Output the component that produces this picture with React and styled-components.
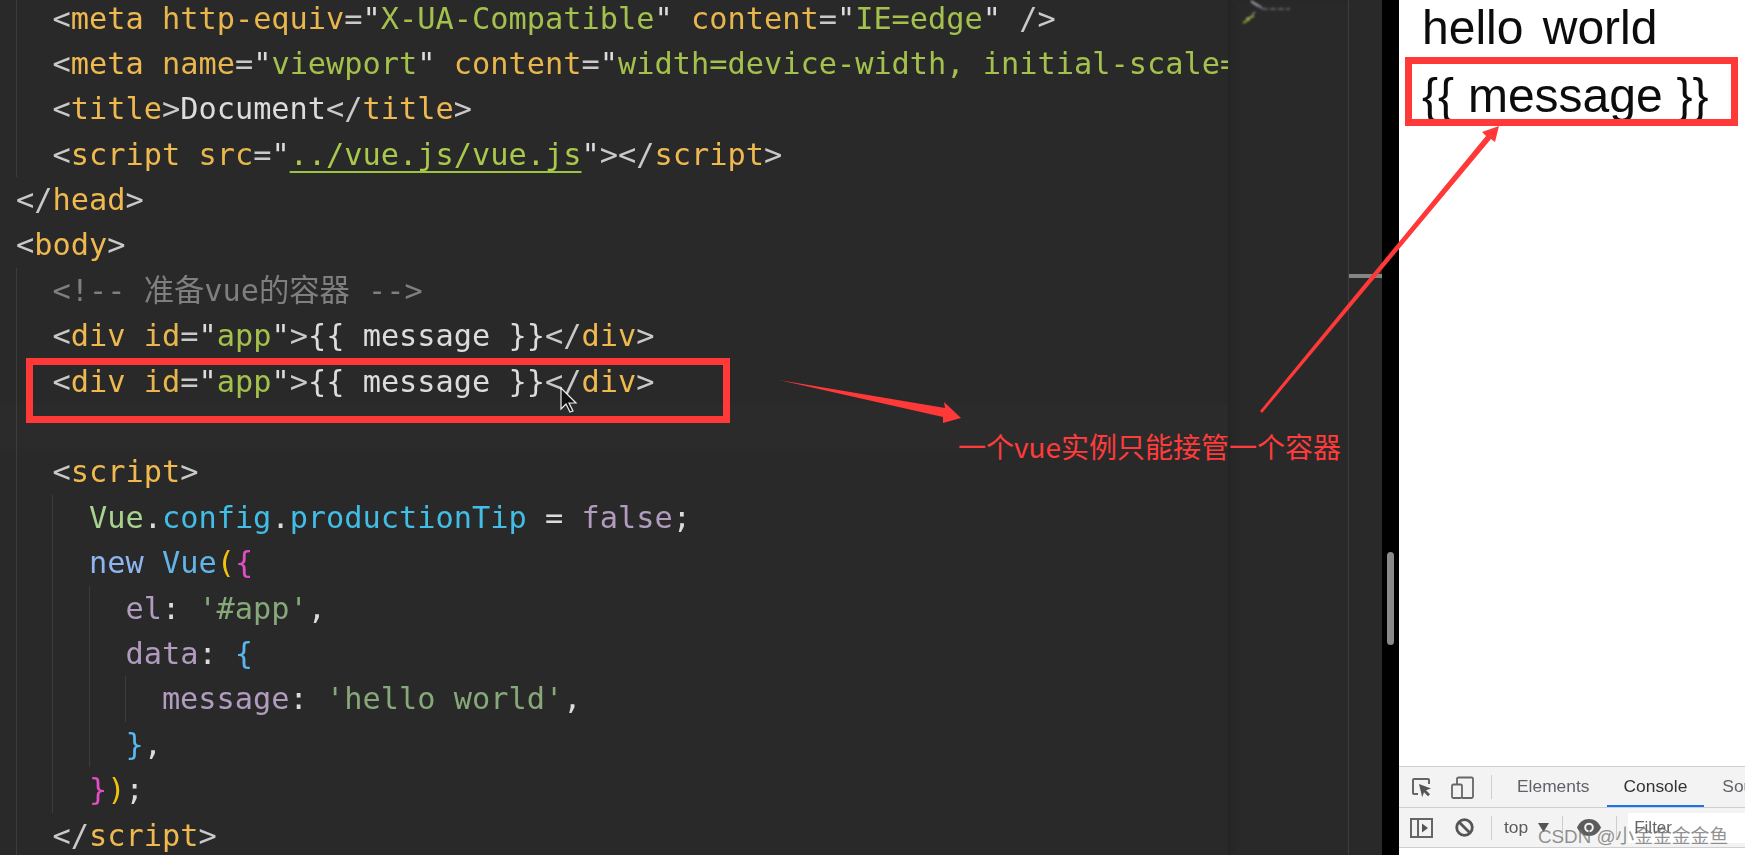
import React from 'react';
import styled, { createGlobalStyle } from 'styled-components';

const GlobalStyle = createGlobalStyle`
  html, body { margin: 0; padding: 0; height: 100%; background: #fff; overflow: hidden; }
  #root { height: 100%; }
`;

const Page = styled.div`
  position: relative;
  display: flex;
  width: 1745px;
  height: 855px;
  overflow: hidden;
`;

/* editor side */
const Editor = styled.div`
  display: flex;
  flex: 0 0 1382px;
  background: #292929;
`;

const CodePane = styled.div`
  flex: 0 0 1228px;
  overflow: hidden;
  font-family: "DejaVu Sans Mono", "Noto Sans CJK SC", monospace;
  font-size: 30.3px;
  color: #d6d6d6;
  filter: blur(0.45px);
`;

const CodeLines = styled.div`
  margin-top: -4.5px;
`;

const Line = styled.div`
  display: flex;
  height: 45.4px;
  line-height: 45.4px;
  padding-left: 16px;
  white-space: pre;
  background: ${(p) => (p.$active ? '#2b2b2b' : 'transparent')};
`;

const Indent = styled.span`
  flex: 0 0 2ch;
  box-sizing: border-box;
  border-left: 1px solid ${(p) => (p.$guide ? '#3c3c3c' : 'transparent')};
`;

const Tok = styled.span`
  color: ${(p) => p.$c};
`;

const LinkTok = styled.span`
  color: #a9c94a;
  text-decoration: underline;
  text-decoration-color: #9bc53d;
  text-decoration-thickness: 2px;
  text-decoration-skip-ink: none;
  text-underline-offset: 6px;
`;

const Minimap = styled.div`
  flex: 0 0 120px;
  border-right: 1px solid #3d3d3d;
  box-shadow: inset 6px 0 6px -4px #232323;
`;

const MiniStrokes = styled.svg`
  display: block;
  filter: blur(0.8px);
`;

const Ruler = styled.div`
  flex: 1;
  padding-top: 274px;
`;

const RulerMark = styled.div`
  height: 4px;
  background: #858585;
`;

const Gutter = styled.div`
  flex: 0 0 17px;
  box-sizing: border-box;
  background: #000;
  padding: 552px 5px 0 5px;
`;

const ScrollThumb = styled.div`
  height: 93px;
  border-radius: 4px;
  background: #8a8a8a;
`;

/* browser side */
const Preview = styled.div`
  flex: 1;
  display: flex;
  flex-direction: column;
  background: #fff;
  font-family: "Liberation Sans", Arial, sans-serif;
`;

const Output = styled.div`
  margin-top: -6px;
  padding-left: 23px;
  font-size: 48px;
  line-height: 68px;
  color: #0c0c0c;
  filter: blur(0.4px);
`;

const OutputLine = styled.div`
  word-spacing: ${(p) => p.$gap}px;
`;

const DevTools = styled.div`
  margin-top: auto;
  height: 89px;
  color: #5a5a5a;
  filter: blur(0.35px);
`;

const ToolRow = styled.div`
  display: flex;
  align-items: center;
  height: ${(p) => p.$h}px;
  background: #f3f3f3;
  border-top: 1px solid ${(p) => p.$line};
  overflow: hidden;
`;

const IconSlot = styled.span`
  display: flex;
  flex: 0 0 auto;
  margin-left: ${(p) => p.$left}px;
`;

const Divider = styled.span`
  flex: 0 0 1px;
  height: 24px;
  margin-left: ${(p) => p.$left}px;
  background: #cdcdcd;
`;

const Tab = styled.span`
  flex: 0 0 auto;
  display: flex;
  align-items: center;
  align-self: stretch;
  box-sizing: border-box;
  padding: 0 17px;
  margin-left: ${(p) => p.$left || 0}px;
  font-size: 17.4px;
  color: ${(p) => (p.$active ? '#333' : '#5f6368')};
  border-bottom: 2px solid ${(p) => (p.$active ? '#1a73e8' : 'transparent')};
`;

const ContextLabel = styled.span`
  flex: 0 0 auto;
  margin-left: 12px;
  font-size: 17.4px;
  color: #5a5a5a;
`;

const FilterBox = styled.span`
  flex: 1;
  align-self: stretch;
  margin: 5px 0 4px 11px;
  padding-left: 6px;
  background: #fff;
  font-size: 17px;
  line-height: 29px;
  color: #666;
`;

const BlankStrip = styled.div`
  height: 10px;
  background: #fff;
  border-top: 1px solid #cfcfcf;
`;

/* hand-drawn annotations lying over the recording */
const Marks = styled.svg`
  position: absolute;
  inset: 0;
  pointer-events: none;
`;

const RedBox = styled.div`
  position: absolute;
  box-sizing: border-box;
  left: ${(p) => p.$x}px;
  top: ${(p) => p.$y}px;
  width: ${(p) => p.$w}px;
  height: ${(p) => p.$h}px;
  border: 7px solid #ff3838;
`;

const Note = styled.div`
  position: absolute;
  left: 958px;
  top: 428px;
  font-family: "Noto Sans CJK SC", sans-serif;
  font-size: 28px;
  line-height: 36px;
  color: #ff3b3b;
  white-space: nowrap;
`;

const Watermark = styled.div`
  position: absolute;
  left: 1538px;
  top: 825px;
  font-family: "Liberation Sans", "Noto Sans CJK SC", sans-serif;
  font-size: 18.8px;
  line-height: 24px;
  color: rgba(110, 110, 110, 0.75);
  white-space: nowrap;
`;

const C = {
  punct: '#c9c9c9',
  tag: '#efb94f',
  attr: '#e8b64c',
  str: '#a3c14c',
  white: '#dcdcdc',
  comment: '#7f7f7f',
  vue: '#a6d48f',
  prop: '#41bde6',
  kw: '#8fb4f2',
  cls: '#62b5e8',
  yellow: '#f4c20d',
  pink: '#e24fc4',
  muted: '#b19cbf',
  mstr: '#87a878',
  brace: '#57b9ef',
};

const T = ({ c, children }) => <Tok $c={c}>{children}</Tok>;

const Div = () => (
  <>
    <T c={C.punct}>&lt;</T>
    <T c={C.tag}>div</T>
    <T c={C.attr}> id</T>
    <T c={C.punct}>=</T>
    <T c={C.white}>"</T>
    <T c={C.str}>app</T>
    <T c={C.white}>"</T>
    <T c={C.punct}>&gt;</T>
    <T c={C.white}>{'{{ message }}'}</T>
    <T c={C.punct}>&lt;/</T>
    <T c={C.tag}>div</T>
    <T c={C.punct}>&gt;</T>
  </>
);

const Guides = ({ list }) =>
  list.map((g, i) => <Indent key={i} $guide={g} />);

const CodeBlock = () => (
  <CodeLines>
    <Line>
      <Guides list={[1]} />
      <T c={C.punct}>&lt;</T><T c={C.tag}>meta</T><T c={C.attr}> http-equiv</T><T c={C.punct}>=</T>
      <T c={C.white}>"</T><T c={C.str}>X-UA-Compatible</T><T c={C.white}>"</T>
      <T c={C.attr}> content</T><T c={C.punct}>=</T><T c={C.white}>"</T><T c={C.str}>IE=edge</T><T c={C.white}>"</T>
      <T c={C.punct}> /&gt;</T>
    </Line>
    <Line>
      <Guides list={[1]} />
      <T c={C.punct}>&lt;</T><T c={C.tag}>meta</T><T c={C.attr}> name</T><T c={C.punct}>=</T>
      <T c={C.white}>"</T><T c={C.str}>viewport</T><T c={C.white}>"</T>
      <T c={C.attr}> content</T><T c={C.punct}>=</T><T c={C.white}>"</T>
      <T c={C.str}>width=device-width, initial-scale=1.0</T><T c={C.white}>"</T><T c={C.punct}> /&gt;</T>
    </Line>
    <Line>
      <Guides list={[1]} />
      <T c={C.punct}>&lt;</T><T c={C.tag}>title</T><T c={C.punct}>&gt;</T><T c={C.white}>Document</T>
      <T c={C.punct}>&lt;/</T><T c={C.tag}>title</T><T c={C.punct}>&gt;</T>
    </Line>
    <Line>
      <Guides list={[1]} />
      <T c={C.punct}>&lt;</T><T c={C.tag}>script</T><T c={C.attr}> src</T><T c={C.punct}>=</T><T c={C.white}>"</T>
      <LinkTok>../vue.js/vue.js</LinkTok><T c={C.white}>"</T>
      <T c={C.punct}>&gt;&lt;/</T><T c={C.tag}>script</T><T c={C.punct}>&gt;</T>
    </Line>
    <Line>
      <T c={C.punct}>&lt;/</T><T c={C.tag}>head</T><T c={C.punct}>&gt;</T>
    </Line>
    <Line>
      <T c={C.punct}>&lt;</T><T c={C.tag}>body</T><T c={C.punct}>&gt;</T>
    </Line>
    <Line>
      <Guides list={[1]} />
      <T c={C.comment}>&lt;!-- 准备vue的容器 --&gt;</T>
    </Line>
    <Line>
      <Guides list={[1]} />
      <Div />
    </Line>
    <Line>
      <Guides list={[1]} />
      <Div />
    </Line>
    <Line $active>
      <Guides list={[1]} />
    </Line>
    <Line>
      <Guides list={[1]} />
      <T c={C.punct}>&lt;</T><T c={C.tag}>script</T><T c={C.punct}>&gt;</T>
    </Line>
    <Line>
      <Guides list={[1, 1]} />
      <T c={C.vue}>Vue</T><T c={C.white}>.</T><T c={C.prop}>config</T><T c={C.white}>.</T>
      <T c={C.prop}>productionTip</T><T c={C.white}> = </T><T c={C.muted}>false</T><T c={C.white}>;</T>
    </Line>
    <Line>
      <Guides list={[1, 1]} />
      <T c={C.kw}>new </T><T c={C.cls}>Vue</T><T c={C.yellow}>(</T><T c={C.pink}>{'{'}</T>
    </Line>
    <Line>
      <Guides list={[1, 1, 1]} />
      <T c={C.muted}>el</T><T c={C.white}>: </T><T c={C.mstr}>'#app'</T><T c={C.white}>,</T>
    </Line>
    <Line>
      <Guides list={[1, 1, 1]} />
      <T c={C.muted}>data</T><T c={C.white}>: </T><T c={C.brace}>{'{'}</T>
    </Line>
    <Line>
      <Guides list={[1, 1, 1, 1]} />
      <T c={C.muted}>message</T><T c={C.white}>: </T><T c={C.mstr}>'hello world'</T><T c={C.white}>,</T>
    </Line>
    <Line>
      <Guides list={[1, 1, 1]} />
      <T c={C.brace}>{'}'}</T><T c={C.white}>,</T>
    </Line>
    <Line>
      <Guides list={[1, 1]} />
      <T c={C.pink}>{'}'}</T><T c={C.yellow}>)</T><T c={C.white}>;</T>
    </Line>
    <Line>
      <Guides list={[1]} />
      <T c={C.punct}>&lt;/</T><T c={C.tag}>script</T><T c={C.punct}>&gt;</T>
    </Line>
  </CodeLines>
);

const InspectIcon = () => (
  <svg width="22" height="22" viewBox="0 0 22 22" fill="none">
    <path d="M7 18H3a1 1 0 0 1-1-1V4a1 1 0 0 1 1-1h14a1 1 0 0 1 1 1v4" stroke="#666" strokeWidth="2" />
    <path d="M8 8l12 4.5-5 1.8 4 4-2 2-4-4-1.800 5z" fill="#555" />
  </svg>
);

const DeviceIcon = () => (
  <svg width="23" height="23" viewBox="0 0 23 23" fill="none" stroke="#666" strokeWidth="1.8">
    <path d="M6 8V3a1.500 1.500 0 0 1 1.500-1.500h13A1.500 1.500 0 0 1 22 3v17.500a1.500 1.500 0 0 1-1.500 1.500H11" />
    <rect x="1" y="8.500" width="10" height="13.500" rx="1.500" />
  </svg>
);

const SidebarIcon = () => (
  <svg width="23" height="20" viewBox="0 0 23 20" fill="none">
    <rect x="1" y="1" width="21" height="18" stroke="#666" strokeWidth="2" />
    <path d="M8 1v18" stroke="#666" strokeWidth="2" />
    <path d="M12 5.500l6 4.500-6 4.500z" fill="#555" />
  </svg>
);

const BlockIcon = () => (
  <svg width="19" height="19" viewBox="0 0 19 19" fill="none" stroke="#555" strokeWidth="2.8">
    <circle cx="9.500" cy="9.500" r="7.800" />
    <path d="M4 4l11 11" />
  </svg>
);

const CaretIcon = () => (
  <svg width="11" height="9" viewBox="0 0 11 9">
    <path d="M0 0h11L5.500 9z" fill="#555" />
  </svg>
);

const EyeIcon = () => (
  <svg width="24" height="17" viewBox="0 0 24 17">
    <path d="M12 0C6.500 0 2.300 3.400 0 8.500 2.300 13.600 6.500 17 12 17s9.700-3.400 12-8.500C21.700 3.400 17.500 0 12 0z" fill="#5c5c5c" />
    <circle cx="12" cy="8.500" r="4.800" fill="#f3f3f3" />
    <circle cx="12" cy="8.500" r="2.800" fill="#5c5c5c" />
  </svg>
);

const App = () => (
  <Page>
    <GlobalStyle />
    <Editor>
      <CodePane>
        <CodeBlock />
      </CodePane>
      <Minimap>
        <MiniStrokes width="100" height="30" viewBox="0 0 100 30" fill="none" strokeWidth="1.6">
          <path d="M23 1l7 5" stroke="#b8b8b8" />
          <path d="M28 4l6 4" stroke="#8f9aa8" />
          <path d="M34 9h28" stroke="#6f6f6f" strokeDasharray="6 2" />
          <path d="M27 12l-3 3" stroke="#8a8a70" />
          <path d="M26 16l-8 3" stroke="#b6bf4e" />
          <path d="M22 19l-7 4" stroke="#9fae45" />
        </MiniStrokes>
      </Minimap>
      <Ruler>
        <RulerMark />
      </Ruler>
    </Editor>
    <Gutter>
      <ScrollThumb />
    </Gutter>
    <Preview>
      <Output>
        <OutputLine $gap={6}>hello world</OutputLine>
        <OutputLine $gap={0.5}>{'{{ message }}'}</OutputLine>
      </Output>
      <DevTools>
        <ToolRow $h={40} $line="#cfcfcf">
          <IconSlot $left={12}><InspectIcon /></IconSlot>
          <IconSlot $left={18}><DeviceIcon /></IconSlot>
          <Divider $left={17} />
          <Tab $left={8}>Elements</Tab>
          <Tab $active>Console</Tab>
          <Tab $left={1}>Sources</Tab>
        </ToolRow>
        <ToolRow $h={39} $line="#d0d0d0">
          <IconSlot $left={11}><SidebarIcon /></IconSlot>
          <IconSlot $left={22}><BlockIcon /></IconSlot>
          <Divider $left={17} />
          <ContextLabel>top</ContextLabel>
          <IconSlot $left={10}><CaretIcon /></IconSlot>
          <Divider $left={13} />
          <IconSlot $left={14}><EyeIcon /></IconSlot>
          <Divider $left={15} />
          <FilterBox>Filter</FilterBox>
        </ToolRow>
        <BlankStrip />
      </DevTools>
    </Preview>

    <RedBox $x={26} $y={358} $w={704} $h={65} />
    <RedBox $x={1405} $y={57} $w={333} $h={69} />
    <Marks width="1745" height="855" viewBox="0 0 1745 855">
      <path d="M779 380L945 408L944 402L961 418L943 423L943 417z" fill="#ff3838" />
      <path d="M1260 411L1486 136L1482 132L1499 126L1495 142L1491 139L1262 413z" fill="#ff3838" />
      <path d="M561 388l0 21 5-5 4 8 3-1-4-8 7 0z" fill="#111" stroke="#eee" strokeWidth="1.200" />
    </Marks>
    <Note>一个vue实例只能接管一个容器</Note>
    <Watermark>CSDN @小金金金金鱼</Watermark>
  </Page>
);

export default App;
